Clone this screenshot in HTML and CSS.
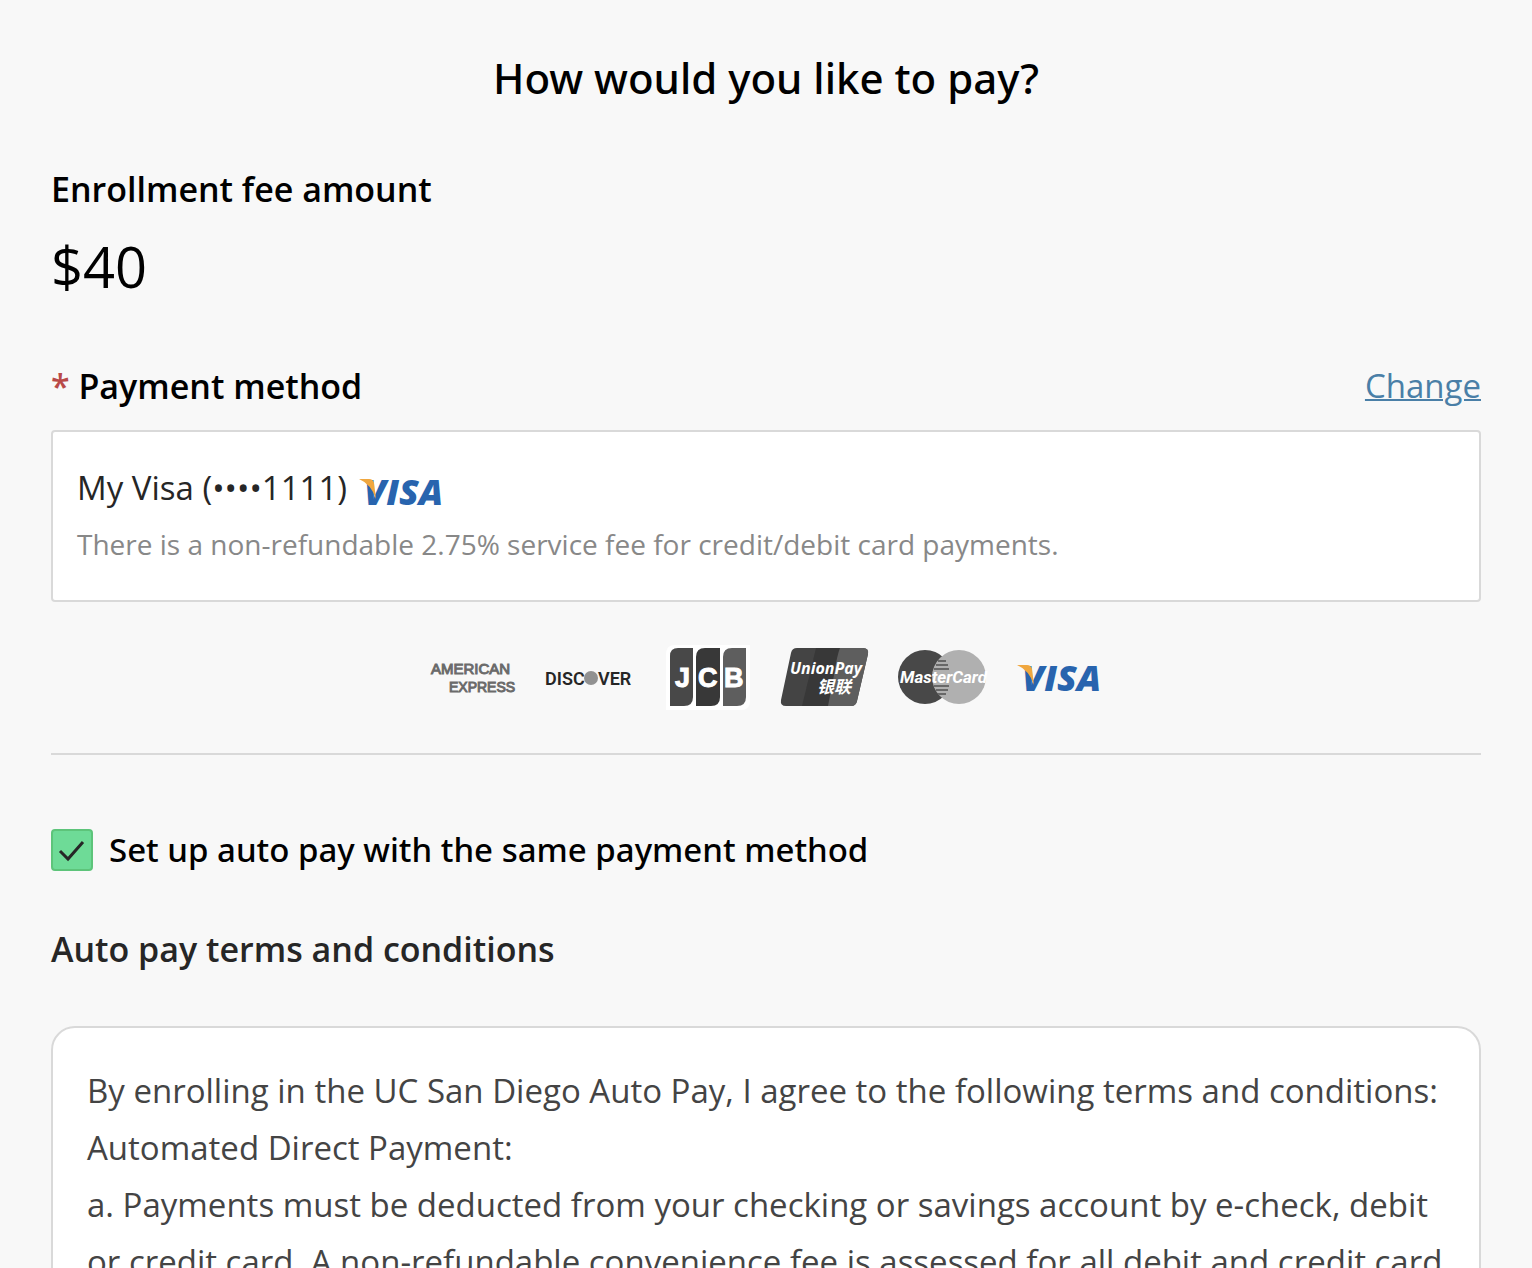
FILE: index.html
```html
<!DOCTYPE html>
<html lang="en">

<head>
    <meta charset="UTF-8">
    <meta name="viewport" content="width=device-width, initial-scale=1.0">
    <title>How would you like to pay?</title>
    <link rel="stylesheet" href="styles.css">
</head>

<body>

    <main class="payment">
        <h1 class="title">How would you like to pay?</h1>

        <h2 class="section-title">Enrollment fee amount</h2>
        <p class="amount">$40</p>

        <div class="method-header">
            <h2 class="section-title"><span class="required">*</span> Payment method</h2>
            <a href="#" class="change-link">Change</a>
        </div>

        <div class="method-box">
            <div class="method-name">
                <span>My Visa (••••1111)</span>
                <svg class="visa-small" viewBox="0 5 88 46" role="img" aria-label="Visa">
                    <text class="visa-text" x="7" y="46">VISA</text>
                    <path d="M2 20H12Q16 20 17 24L19 40Q14 25 2 20Z" fill="#f0a73f"/>
                </svg>
            </div>
            <p class="method-note">There is a non-refundable 2.75% service fee for credit/debit card payments.</p>
        </div>

        <div class="card-logos">
            <!-- American Express -->
            <svg class="logo" viewBox="0 0 88 66" role="img" aria-label="American Express">
                <text class="amex-text" x="1" y="29" font-size="15">AMERICAN</text>
                <text class="amex-text" x="19" y="47" font-size="14">EXPRESS</text>
            </svg>
            <!-- Discover -->
            <svg class="logo" viewBox="0 0 88 66" role="img" aria-label="Discover">
                <text class="discover-text" x="-2" y="40">DISC</text>
                <circle cx="44" cy="33" r="7" fill="#919191"/>
                <text class="discover-text" x="51" y="40">VER</text>
            </svg>
            <!-- JCB -->
            <svg class="logo" viewBox="0 0 88 66" role="img" aria-label="JCB">
                <path d="M11 0H86V56Q86 65 77 65H2V9Q2 0 11 0Z" fill="#fff"/>
                <path d="M14 3H29V52Q29 61 20 61H6V11Q6 3 14 3Z" fill="#484848"/>
                <path d="M41 3H56V52Q56 61 47 61H32V12Q32 3 41 3Z" fill="#383838"/>
                <path d="M68 3H82V52Q82 61 73 61H59V12Q59 3 68 3Z" fill="#5e5e5e"/>
                <g class="jcb-text">
                    <text x="11" y="42">J</text>
                    <text x="34" y="42">C</text>
                    <text x="60" y="42">B</text>
                </g>
            </svg>
            <!-- UnionPay -->
            <svg class="logo" viewBox="0 0 88 66" role="img" aria-label="UnionPay">
                <path d="M16 3H82Q88 3 87 9L76 56Q75 61 70 61H5Q-1 61 0 55L10 8Q11 3 16 3Z" fill="#444"/>
                <path d="M35 3H60L48 61H21Z" fill="#383838"/>
                <path d="M59 3H82Q88 3 87 9L76 56Q75 61 70 61H47L53 30Q56 10 59 3Z" fill="#5e5e5e"/>
                <text class="union-text" x="9" y="29">UnionPay</text>
                <text class="union-cjk" x="36" y="48">银联</text>
            </svg>
            <!-- MasterCard -->
            <svg class="logo" viewBox="0 0 88 66" role="img" aria-label="MasterCard">
                <circle cx="27" cy="32" r="27" fill="#484848"/>
                <circle cx="61" cy="32" r="27" fill="#b0b0b0"/>
                <path d="M40 16H48M38 20H50M36 24H51M36 41H51M38 45H50M40 49H48" stroke="#686868" stroke-width="2"/>
                <text class="master-text" x="2" y="38">MasterCard</text>
            </svg>
            <!-- Visa -->
            <svg class="logo" viewBox="0 0 88 66" role="img" aria-label="Visa">
                <text class="visa-text" x="7" y="46">VISA</text>
                <path d="M2 20H12Q16 20 17 24L19 40Q14 25 2 20Z" fill="#f0a73f"/>
            </svg>
        </div>

        <hr class="divider">

        <div class="autopay">
            <span class="check-wrap">
                <input type="checkbox" id="autopay" class="check" checked>
                <svg class="check-icon" viewBox="0 0 42 42" aria-hidden="true">
                    <path d="M9 22L17 30L32 13" fill="none" stroke="#262626" stroke-width="3"/>
                </svg>
            </span>
            <label for="autopay" class="autopay-label">Set up auto pay with the same payment method</label>
        </div>

        <h2 class="section-title terms-title">Auto pay terms and conditions</h2>

        <div class="terms">
            <p>By enrolling in the UC San Diego Auto Pay, I agree to the following terms and conditions:</p>
            <p>Automated Direct Payment:</p>
            <p>a. Payments must be deducted from your checking or savings account by e-check, debit or credit card. A non-refundable convenience fee is assessed for all debit and credit card</p>
        </div>
    </main>

</body>

</html>
```
FILE: styles.css
```css
* {
    box-sizing: border-box;
}

body {
    margin: 0;
    background-color: #f8f8f8;
    color: #000;
    font-family: "Open Sans", "Noto Sans", sans-serif;
    font-size: 33px;
    line-height: 48px;
}

h1,
h2,
p {
    margin: 0;
}

.payment {
    padding: 48px 51px;
}

.title {
    margin-bottom: 57px;
    font-family: "Noto Sans", sans-serif;
    font-size: 42px;
    font-weight: 500;
    line-height: 60px;
    text-align: center;
}

.section-title {
    font-size: 34px;
    font-weight: 600;
}

.amount {
    margin: 15px 0 58px;
    font-size: 56px;
    line-height: 76px;
}

.method-header {
    display: flex;
    justify-content: space-between;
    margin-bottom: 20px;
}

.required {
    color: #b94a48;
}

.change-link {
    color: #4a7fa7;
    text-decoration-thickness: 2px;
}

.method-box {
    padding: 32px 24px 36px;
    background-color: #fff;
    border: 2px solid #d9d9d9;
    border-radius: 4px;
}

.method-name {
    display: flex;
    gap: 10px;
    margin-bottom: 12px;
    color: #262626;
}

.visa-small {
    width: 88px;
    height: 46px;
    overflow: visible;
}

.method-note {
    color: #888;
    font-size: 28px;
    line-height: 40px;
}

.card-logos {
    display: flex;
    justify-content: center;
    gap: 29px;
    margin: 43px 0 42px;
}

.logo {
    width: 88px;
    height: 66px;
    overflow: visible;
}

.visa-text {
    font: italic 800 36px "Open Sans", sans-serif;
    fill: #2864ae;
}

.amex-text {
    font-family: "Liberation Sans", sans-serif;
    fill: #6b6b6b;
    stroke: #6b6b6b;
}

.discover-text {
    font: 600 18px Roboto, sans-serif;
    fill: #262626;
}

.jcb-text {
    font: 700 27px "Liberation Sans", sans-serif;
    fill: #fff;
    stroke: #fff;
}

.union-text {
    font: italic 700 16px "Open Sans", sans-serif;
    fill: #fff;
}

.union-cjk {
    font: italic 700 17px "Noto Sans CJK SC", sans-serif;
    fill: #fff;
}

.master-text {
    font: italic 700 17px Roboto, sans-serif;
    fill: #fff;
}

.divider {
    height: 2px;
    margin: 0 0 71px;
    border: none;
    background-color: #d9d9d9;
}

.autopay {
    display: flex;
    align-items: center;
    gap: 16px;
    margin-bottom: 51px;
}

.check-wrap {
    position: relative;
    width: 42px;
    height: 42px;
}

.check {
    appearance: none;
    display: block;
    width: 42px;
    height: 42px;
    margin: 0;
    background-color: #6edb97;
    border: 2px solid #5dc47a;
    border-radius: 4px;
    cursor: pointer;
}

.check-icon {
    position: absolute;
    inset: 0;
    pointer-events: none;
}

.check:not(:checked) + .check-icon {
    display: none;
}

.autopay-label {
    font-family: "Noto Sans", sans-serif;
    font-weight: 500;
}

.terms-title {
    margin-bottom: 53px;
    color: #262626;
}

.terms {
    padding: 34px;
    background-color: #fff;
    border: 2px solid #d9d9d9;
    border-radius: 24px;
    color: #444;
    line-height: 57px;
}
```
